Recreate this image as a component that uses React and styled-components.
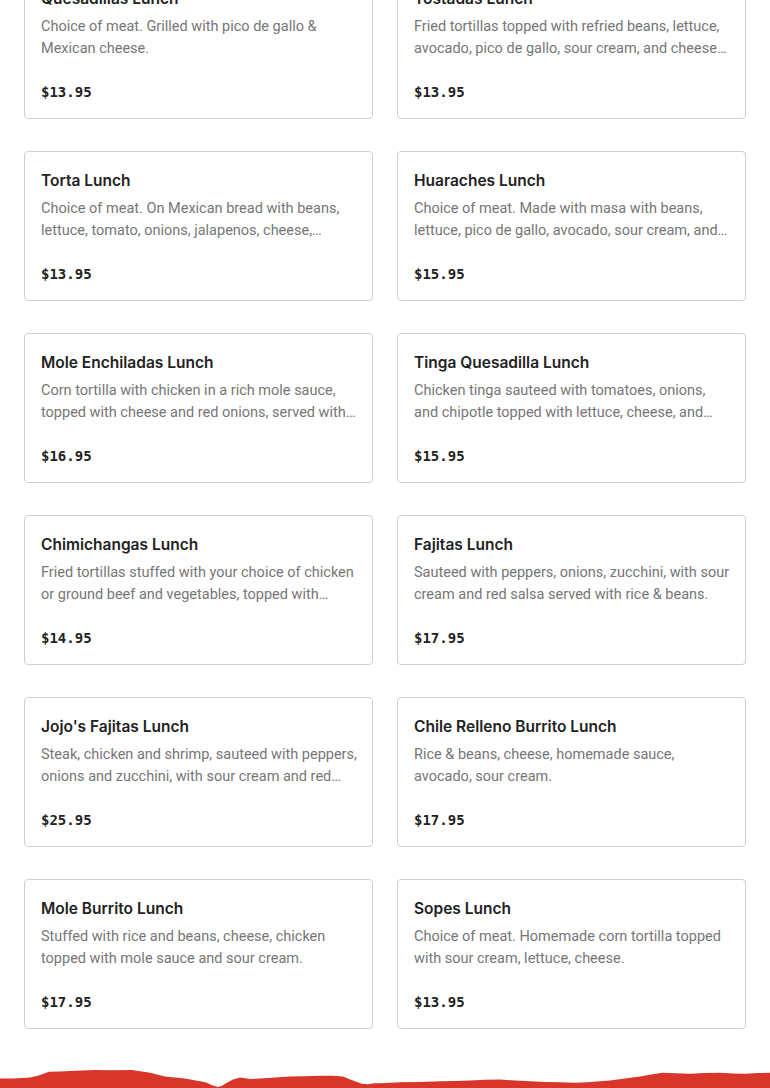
import React from 'react';
import styled, { createGlobalStyle } from 'styled-components';

const GlobalStyle = createGlobalStyle`
  body {
    margin: 0;
    background: #fff;
    font-family: Roboto, "Liberation Sans", Arial, sans-serif;
  }
`;

const items = [
  { name: 'Quesadillas Lunch', desc: 'Choice of meat. Grilled with pico de gallo & Mexican cheese.', price: '$13.95' },
  { name: 'Tostadas Lunch', desc: 'Fried tortillas topped with refried beans, lettuce, avocado, pico de gallo, sour cream, and cheese. Choice of meat.', price: '$13.95' },
  { name: 'Torta Lunch', desc: 'Choice of meat. On Mexican bread with beans, lettuce, tomato, onions, jalapenos, cheese, avocado and sour cream.', price: '$13.95' },
  { name: 'Huaraches Lunch', desc: 'Choice of meat. Made with masa with beans, lettuce, pico de gallo, avocado, sour cream, and cheese.', price: '$15.95' },
  { name: 'Mole Enchiladas Lunch', desc: 'Corn tortilla with chicken in a rich mole sauce, topped with cheese and red onions, served with rice & beans.', price: '$16.95' },
  { name: 'Tinga Quesadilla Lunch', desc: 'Chicken tinga sauteed with tomatoes, onions, and chipotle topped with lettuce, cheese, and sour cream.', price: '$15.95' },
  { name: 'Chimichangas Lunch', desc: 'Fried tortillas stuffed with your choice of chicken or ground beef and vegetables, topped with cheese and sour cream.', price: '$14.95' },
  { name: 'Fajitas Lunch', desc: 'Sauteed with peppers, onions, zucchini, with sour cream and red salsa served with rice & beans.', price: '$17.95' },
  { name: "Jojo's Fajitas Lunch", desc: 'Steak, chicken and shrimp, sauteed with peppers, onions and zucchini, with sour cream and red salsa.', price: '$25.95' },
  { name: 'Chile Relleno Burrito Lunch', desc: 'Rice & beans, cheese, homemade sauce, avocado, sour cream.', price: '$17.95' },
  { name: 'Mole Burrito Lunch', desc: 'Stuffed with rice and beans, cheese, chicken topped with mole sauce and sour cream.', price: '$17.95' },
  { name: 'Sopes Lunch', desc: 'Choice of meat. Homemade corn tortilla topped with sour cream, lettuce, cheese.', price: '$13.95' },
];

export default function App() {
  return (
    <Page>
      <GlobalStyle />
      <MenuGrid>
        {items.map((item) => (
          <Card key={item.name}>
            <Title>{item.name}</Title>
            <Desc>{item.desc}</Desc>
            <Price>{item.price}</Price>
          </Card>
        ))}
      </MenuGrid>
      <TornEdge viewBox="0 0 770 20" preserveAspectRatio="none">
        <path
          fill="#d8362a"
          d="M0 10 L12 10 L22 9.5 L30 9 L38 7 L49 3 L60 2.5 L70 2 L82 1.6 L95 1 L110 1.2 L132 1 L142 2.5 L150 4 L158 6 L165 8 L175 9 L185 10 L193 11.5 L200 13 L207 14.5 L212 17 L218 19 L222 17.5 L226 15 L233 11 L240 9 L250 10.5 L260 10 L275 9 L290 8 L305 7.5 L320 7 L333 7.2 L343 8 L349 10.5 L355 13 L362 15.5 L368 16 L374 15 L380 15 L390 14.6 L400 14 L420 13.6 L441 13 L455 12.5 L470 12 L485 11.4 L500 11 L515 12.2 L530 13 L545 13.6 L560 14 L575 14.4 L588 14 L600 13 L610 12 L625 10 L640 8 L650 6 L662 4 L675 4.6 L690 5 L705 4.2 L720 4 L733 4.8 L745 5 L758 4.3 L770 4 L770 20 L0 20 Z"
        />
      </TornEdge>
    </Page>
  );
}

const Page = styled.div`
  overflow: hidden;
  height: 1088px;
  display: flex;
  flex-direction: column;
`;

const MenuGrid = styled.div`
  display: grid;
  grid-template-columns: 1fr 1fr;
  column-gap: 24px;
  row-gap: 32px;
  padding: 0 24px;
  margin-top: -31px;
`;

const Card = styled.div`
  box-sizing: border-box;
  height: 150px;
  border: 1px solid #cfcfcf;
  border-radius: 4px;
  padding: 17px 15px 16px 16px;
  display: flex;
  flex-direction: column;
`;

const Title = styled.div`
  font-family: Inter, Roboto, sans-serif;
  font-size: 15.5px;
  line-height: 24px;
  font-weight: 600;
  color: #222;
  margin-bottom: 5px;
`;

const Desc = styled.div`
  font-size: 14.5px;
  line-height: 22px;
  color: #767676;
  display: -webkit-box;
  -webkit-line-clamp: 2;
  -webkit-box-orient: vertical;
  overflow: hidden;
`;

const Price = styled.div`
  margin-top: auto;
  font-family: "DejaVu Sans Mono", "Liberation Mono", monospace;
  font-weight: 700;
  font-size: 14px;
  line-height: 20px;
  color: #222;
`;

const TornEdge = styled.svg`
  display: block;
  width: 100%;
  height: 20px;
  margin-top: 40px;
`;
